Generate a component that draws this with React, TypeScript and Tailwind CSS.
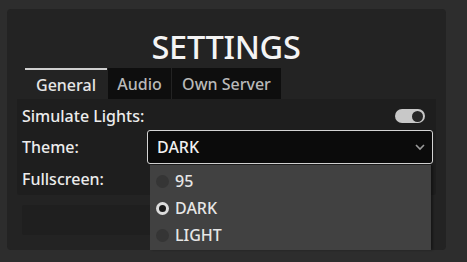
import React from "react";

export default function App() {
  const font = { fontFamily: '"Noto Sans", "Open Sans", sans-serif' };
  return (
    <div className="w-[467px] h-[262px] bg-[#2d2d2d] pt-[9px] pl-[7px] overflow-hidden" style={font}>
      <div className="w-[439px] h-[241px] bg-[#232323] rounded-[4px] flex flex-col">
        <div className="h-[59px] flex items-end justify-center pb-[5px] pr-[1px]">
          <span className="text-[32.5px] leading-none font-medium text-[#f4f4f4] tracking-[-0.3px]">SETTINGS</span>
        </div>
        <div className="flex h-[31px] pl-[18px] gap-[1px]">
          <div className="w-[82px] border-t-2 border-[#cfcfcf] bg-[#232323] flex items-center justify-center text-[16px] font-medium text-[#e6e6e6] pt-[1px]">General</div>
          <div className="w-[63px] bg-[#0e0e0e] flex items-center justify-center text-[16px] font-medium text-[#b9b9b9] pt-[1px]">Audio</div>
          <div className="w-[109px] bg-[#0e0e0e] flex items-center justify-center text-[16px] font-medium text-[#b9b9b9] pt-[1px]">Own Server</div>
        </div>
        <div className="mx-[10px] h-[96px] bg-[#1e1e1e] rounded-b-[3px] pl-[5px] pr-[3px] flex flex-col">
          <div className="h-[32px] flex items-center justify-between pt-[2px]">
            <span className="text-[16px] font-medium text-[#ececec]">Simulate Lights:</span>
            <div className="mr-[8px] w-[30px] h-[14px] rounded-full bg-[#c8c8c8] flex items-center justify-end pr-[2px]">
              <div className="w-[11px] h-[11px] rounded-full bg-[#262626]" />
            </div>
          </div>
          <div className="h-[32px] flex items-center">
            <span className="w-[125px] text-[16px] font-medium text-[#ececec]">Theme:</span>
            <div className="relative flex-1">
              <div className="h-[34px] mt-[-1px] border border-[#d4d4d4] rounded-[3px] bg-[#0b0b0b] flex items-center justify-between pl-[9px] pr-[6px]">
                <span className="text-[16px] font-medium text-[#f0f0f0]">DARK</span>
                <svg width="12" height="8" viewBox="0 0 12 8" className="mt-[1px]">
                  <path d="M2 2 L6 6 L10 2" stroke="#9a9a9a" strokeWidth="1.6" fill="none" />
                </svg>
              </div>
              <div className="absolute left-[3px] right-[2px] top-[34px] h-[85px] bg-[#414141] shadow-[2px_0_2px_rgba(0,0,0,0.35)] flex flex-col pt-[3px] z-10">
                {[
                  { label: "95", sel: false },
                  { label: "DARK", sel: true },
                  { label: "LIGHT", sel: false },
                ].map((o) => (
                  <div key={o.label} className="h-[27px] flex items-center pl-[6px] gap-[6px]">
                    {o.sel ? (
                      <div className="w-[13px] h-[13px] rounded-full bg-[#dcdcdc] flex items-center justify-center">
                        <div className="w-[7px] h-[7px] rounded-full bg-[#1a1a1a]" />
                      </div>
                    ) : (
                      <div className="w-[13px] h-[13px] rounded-full bg-[#353535]" />
                    )}
                    <span className="text-[16px] font-medium text-[#e6e6e6]">{o.label}</span>
                  </div>
                ))}
              </div>
            </div>
          </div>
          <div className="h-[32px] flex items-center">
            <span className="text-[16px] font-medium text-[#ececec]">Fullscreen:</span>
          </div>
        </div>
        <div className="mt-[10px] mx-[15px] h-[30px] bg-[#1f1f1f] rounded-[2px]" />
      </div>
    </div>
  );
}
